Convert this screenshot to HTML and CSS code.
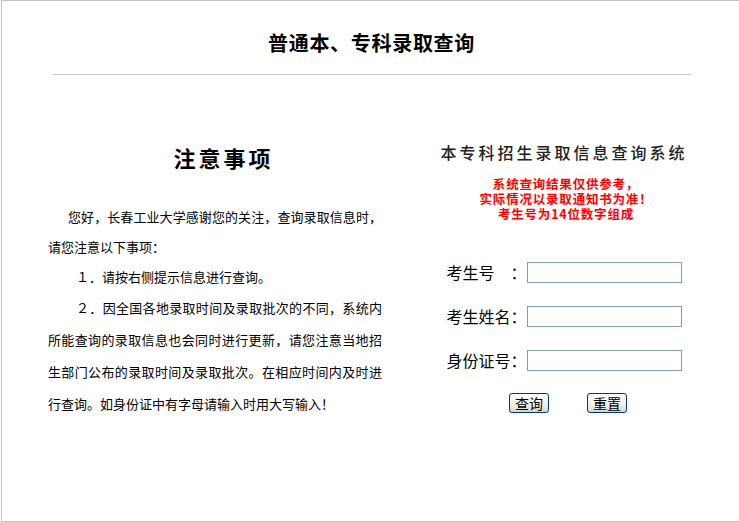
FILE: index.html
```html
<!DOCTYPE html>
<html lang="zh-CN">
<head>
    <meta charset="UTF-8">
    <title>普通本、专科录取查询</title>
    <link rel="stylesheet" href="styles.css">
</head>
<body>
    <div class="page">
        <h1 class="title">普通本、专科录取查询</h1>
        <div class="rule"></div>
        <div class="main">
            <div class="notice">
                <h2>注意事项</h2>
                <p class="p1">您好，长春工业大学感谢您的关注，查询录取信息时，请您注意以下事项：</p>
                <p class="item">１．请按右侧提示信息进行查询。</p>
                <p class="item item2">２．因全国各地录取时间及录取批次的不同，系统内所能查询的录取信息也会同时进行更新，请您注意当地招生部门公布的录取时间及录取批次。在相应时间内及时进行查询。如身份证中有字母请输入时用大写输入！</p>
            </div>
            <div class="query">
                <h3>本专科招生录取信息查询系统</h3>
                <div class="tips">
                    <div class="tip">系统查询结果仅供参考，</div>
                    <div class="tip">实际情况以录取通知书为准！</div>
                    <div class="tip">考生号为14位数字组成</div>
                </div>
                <form class="form" onsubmit="return false;">
                    <div class="row">
                        <label for="ksh">考生号　：</label>
                        <input type="text" id="ksh">
                    </div>
                    <div class="row">
                        <label for="xm">考生姓名：</label>
                        <input type="text" id="xm">
                    </div>
                    <div class="row">
                        <label for="sfz">身份证号：</label>
                        <input type="text" id="sfz">
                    </div>
                    <div class="buttons">
                        <button type="submit">查询</button>
                        <button type="reset">重置</button>
                    </div>
                </form>
            </div>
        </div>
    </div>
</body>
</html>
```

FILE: styles.css
```css
body {
    margin: 0;
    padding: 0;
    overflow: hidden;
    background: #fff;
    color: #000;
    font-family: "Noto Sans CJK SC", "Liberation Sans", sans-serif;
}
.page {
    margin-left: 1px;
    width: 739px;
    height: 520px;
    border: 1px solid #c4c4c4;
}
.title {
    margin: 28px 0 0;
    font-size: 20px;
    line-height: 28px;
    font-weight: bold;
    letter-spacing: 0.7px;
    text-align: center;
}
.rule {
    margin: 17px 50px 0;
    height: 1px;
    background: #c8c8c8;
}
.main {
    display: flex;
    padding-left: 46px;
}
.notice {
    width: 334px;
    font-size: 13px;
}
.notice h2 {
    margin: 67px 0 0;
    padding-left: 17px;
    font-size: 22px;
    line-height: 30px;
    font-weight: bold;
    letter-spacing: 3px;
    text-align: center;
}
.notice p {
    margin: 0;
    text-align: justify;
}
.p1 {
    margin-top: 30px !important;
    line-height: 30px;
    text-indent: 20px;
}
.item {
    line-height: 30px;
    text-indent: 28px;
}
.item2 {
    line-height: 32px;
}
.query {
    flex: 1;
    margin-left: 5px;
    text-align: center;
}
.query h3 {
    margin: 65px 0 0;
    font-size: 16px;
    line-height: 24px;
    font-weight: 500;
    letter-spacing: 3px;
    color: #222;
}
.tips {
    margin-top: 12px;
    padding-left: 4px;
    color: #f00;
    font-size: 12.5px;
    font-weight: bold;
    letter-spacing: 0.8px;
}
.tip {
    height: 15px;
    line-height: 15px;
}
.form {
    margin: 40px 0 0;
}
.row {
    display: flex;
    align-items: center;
    justify-content: center;
    height: 22px;
    margin-bottom: 22px;
}
.row label {
    width: 80px;
    font-size: 16px;
    text-align: left;
}
.row input {
    box-sizing: border-box;
    width: 155px;
    height: 21px;
    margin: 0;
    border: 1px solid #7f9db9;
    outline: none;
}
.buttons {
    display: flex;
    justify-content: center;
    gap: 38px;
    padding-left: 8px;
}
.buttons button {
    width: 40px;
    height: 20px;
    padding: 0;
    border: 1px solid #003c74;
    border-radius: 3px;
    background: linear-gradient(#ffffff, #f0efe8 60%, #d8d5c8);
    font-family: "Noto Sans CJK SC", sans-serif;
    font-size: 14px;
    line-height: 18px;
    color: #000;
}
```
